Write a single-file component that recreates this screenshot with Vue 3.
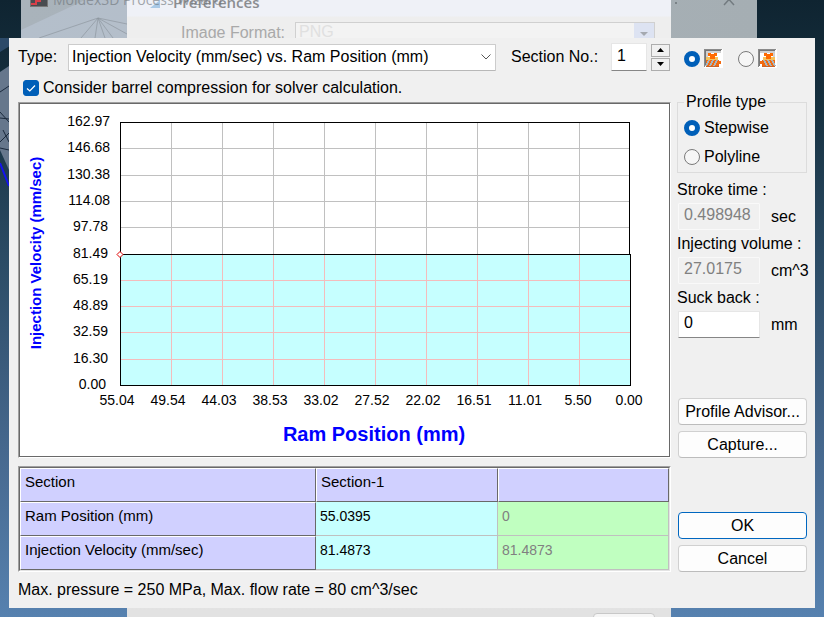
<script setup>
import { computed, ref } from 'vue'

const profileKind = ref('Injection Velocity (mm/sec) vs. Ram Position (mm)')
const section = ref(1)
const compression = ref(true)
const direction = ref('left')
const shape = ref('Stepwise')
const strokeTime = ref('0.498948')
const volume = ref('27.0175')
const suckBack = ref('0')

const plot = { left: 100, top: 18, width: 510, height: 263 }
const yValues = ['162.97', '146.68', '130.38', '114.08', '97.78', '81.49', '65.19', '48.89', '32.59', '16.30', '0.00']
const xValues = ['55.04', '49.54', '44.03', '38.53', '33.02', '27.52', '22.02', '16.51', '11.01', '5.50', '0.00']

const yTicks = computed(() =>
  yValues.map((label, i) => {
    const y = plot.top + Math.round((plot.height * i) / 10)
    return { label, y, textX: 90 - 2 * (6 - label.length), lower: i > 5 }
  })
)
const xTicks = computed(() =>
  xValues.map((label, i) => ({
    label,
    x: plot.left + 51 * i,
    textX: plot.left - 3 + 51 * i + 2 * (5 - label.length)
  }))
)
const levelY = 150
const bottomY = plot.top + plot.height
const rightX = plot.left + plot.width
</script>

<template>
  <div class="desktop">
    <div class="backdrop" aria-hidden="true">
      <svg class="mesh" width="127" height="617" viewBox="0 0 127 617">
        <path d="M0 52 L85 0 H127 V38 H0 Z" fill="#2c4a69" />
        <path d="M0 72 L9 66 V170 L0 150 Z" fill="#66778c" />
        <path d="M0 92 L9 86 M0 118 L9 119 M0 142 L9 133 M0 148 L9 150 M0 112 L9 122 M3 130 L9 142" stroke="#1b2a3c" fill="none" />
        <path d="M0 163 L9 186" stroke="#1414f0" stroke-width="2" />
      </svg>
      <div class="wizard">
        <svg class="fan" width="106" height="38" viewBox="0 0 106 38">
          <path d="M0 30 L64 0 H106 V38 H0 Z" fill="#bcc7d6" opacity=".6" />
          <path d="M18 38 L77 18 L60 38 M77 18 L74 38 M77 18 L84 38 M77 18 L92 38 M77 18 L106 34 M77 18 L106 24" stroke="#8f979f" fill="none" opacity=".7" />
        </svg>
        <svg class="close" width="12" height="12" viewBox="0 0 12 12">
          <path d="M1 0 L11 11 M11 0 L1 11" stroke="#737b80" stroke-width="1.5" fill="none" />
        </svg>
        <i class="dot"></i>
      </div>
      <div class="prefs">
        <div class="prefs-title"><i class="prefs-icon"></i><span>Preferences</span></div>
        <div class="prefs-row">
          <span>Image Format:</span>
          <div class="prefs-combo"><span>PNG</span><b></b></div>
        </div>
        <div class="prefs-button"></div>
      </div>
      <div class="wizard-title">
        <svg width="18" height="16" viewBox="0 0 18 16">
          <rect x="0.5" y="0.5" width="17" height="14" fill="#494c50" stroke="#777" />
          <path d="M1 12 H6 V9 H10 V5 H17" stroke="#d8404a" stroke-width="2" fill="none" />
        </svg>
        <span>Moldex3D Process Wizard</span>
      </div>
    </div>

    <main class="dialog">
      <section class="main">
        <div class="topbar">
          <label class="type-label" for="type">Type:</label>
          <div class="combo">
            <select id="type" v-model="profileKind">
              <option>Injection Velocity (mm/sec) vs. Ram Position (mm)</option>
            </select>
            <svg width="12" height="8" viewBox="0 0 12 8"><path d="M1.5 1.5 L6 6 L10.5 1.5" fill="none" stroke="#555" /></svg>
          </div>
          <label class="section-label" for="section">Section No.:</label>
          <input id="section" v-model="section" class="box section-box" type="text" />
          <div class="spin">
            <button type="button" aria-label="Next section" @click="section++">
              <svg width="7" height="4" viewBox="0 0 7 4"><path d="M0 4 L3.5 0 L7 4 Z" /></svg>
            </button>
            <button type="button" aria-label="Previous section" @click="section--">
              <svg width="7" height="4" viewBox="0 0 7 4"><path d="M0 0 L3.5 4 L7 0 Z" /></svg>
            </button>
          </div>
        </div>

        <label class="check">
          <input v-model="compression" type="checkbox" />
          <svg width="16" height="16" viewBox="0 0 16 16"><path d="M4 8.5 L6.8 11 L12 5.5" fill="none" stroke="#fff" stroke-width="1.2" /></svg>
          <span>Consider barrel compression for solver calculation.</span>
        </label>

        <div class="chart">
          <svg viewBox="0 0 649 352" role="img" aria-label="Injection velocity against ram position">
            <g shape-rendering="crispEdges">
              <rect :x="plot.left" :y="levelY" :width="plot.width" :height="bottomY - levelY" fill="#c6ffff" />
              <template v-for="t in xTicks.slice(1, -1)" :key="t.label">
                <rect :x="t.x" :y="plot.top" width="1" :height="levelY - plot.top" fill="#c0c0c0" />
                <rect :x="t.x" :y="levelY" width="1" :height="bottomY - levelY" fill="#f4bcbc" />
              </template>
              <rect
                v-for="t in yTicks.slice(1, -1)" :key="t.label"
                :x="plot.left" :y="t.y" :width="plot.width" height="1" :fill="t.lower ? '#f4bcbc' : '#c0c0c0'"
              />
              <rect :x="plot.left" :y="plot.top" :width="plot.width" height="1" />
              <rect :x="plot.left" :y="plot.top" width="1" :height="plot.height" />
              <rect :x="rightX - 1" :y="plot.top" width="1" :height="levelY - plot.top" />
              <rect :x="rightX" :y="levelY" width="1" :height="bottomY - levelY" />
              <rect :x="plot.left" :y="levelY" :width="plot.width + 1" height="1" />
              <rect :x="plot.left" :y="bottomY" :width="plot.width + 1" height="1" />
            </g>
            <path class="handle" d="M97 150.5 L100 147.5 L103 150.5 L100 153.5 Z" />
            <g class="tick">
              <text v-for="t in yTicks" :key="t.label" :x="t.textX" :y="t.y + 4" text-anchor="end">{{ t.label }}</text>
              <text v-for="t in xTicks" :key="t.label" :x="t.textX" y="301" text-anchor="middle">{{ t.label }}</text>
            </g>
            <text class="x-title" x="354" y="337" text-anchor="middle">Ram Position (mm)</text>
            <text class="y-title" transform="translate(21 149) rotate(-90)" text-anchor="middle">Injection Velocity (mm/sec)</text>
          </svg>
        </div>

        <div class="grid-frame">
          <table>
            <colgroup><col class="c1" /><col class="c2" /><col class="c3" /></colgroup>
            <tbody>
              <tr><th scope="col">Section</th><th scope="col">Section-1</th><th></th></tr>
              <tr><th scope="row">Ram Position (mm)</th><td class="cyan">55.0395</td><td class="green">0</td></tr>
              <tr><th scope="row">Injection Velocity (mm/sec)</th><td class="cyan">81.4873</td><td class="green">81.4873</td></tr>
            </tbody>
          </table>
        </div>
        <p class="limits">Max. pressure = 250 MPa, Max. flow rate = 80 cm^3/sec</p>
      </section>

      <aside class="side">
        <div class="directions">
          <label v-for="d in ['left', 'right']" :key="d">
            <input v-model="direction" type="radio" name="direction" :value="d" :aria-label="'Ram on the ' + d" />
            <svg class="machine" width="19" height="19" viewBox="0 0 19 19" shape-rendering="crispEdges">
              <path d="M0 0 H19 V19 H0 Z" fill="#fff" />
              <path d="M0 0 H18 V1 H1 V18 H0 Z" fill="#8a8a8a" />
              <path d="M1 1 H17 V2 H2 V17 H1 Z" fill="#777" />
              <g :transform="d === 'right' ? 'translate(19 0) scale(-1 1)' : undefined">
                <path d="M2 2 H17 V4 H2 Z M2 4 H4 V8 H2 Z" fill="#d0d0d0" />
                <path d="M4 4 H7 V5 H10 V4 H13 V7 H11 V10 H6 V7 H4 Z" fill="#ff6a00" />
                <path d="M2 8 H6 V10 H11 V8 H14 V11 H2 Z" fill="#f6c25a" />
                <path d="M2 11 H15 V12 H17 V15 H15 V17 H2 Z" fill="#f26a10" />
                <path d="M5 11 L2 17 M9 11 L6 17 M13 11 L10 17" stroke="#a9b5bd" stroke-width="1.5" />
                <path d="M2 17 H15 V18 H2 Z" fill="#c8632a" />
              </g>
            </svg>
          </label>
        </div>

        <fieldset>
          <legend>Profile type</legend>
          <label v-for="s in ['Stepwise', 'Polyline']" :key="s">
            <input v-model="shape" type="radio" name="shape" :value="s" /><span>{{ s }}</span>
          </label>
        </fieldset>

        <div class="fields">
          <div class="field">
            <label for="stroke">Stroke time :</label>
            <div><input id="stroke" v-model="strokeTime" class="box" type="text" disabled /><span>sec</span></div>
          </div>
          <div class="field">
            <label for="volume">Injecting volume :</label>
            <div><input id="volume" v-model="volume" class="box" type="text" disabled /><span>cm^3</span></div>
          </div>
          <div class="field">
            <label for="suck">Suck back :</label>
            <div><input id="suck" v-model="suckBack" class="box" type="text" /><span>mm</span></div>
          </div>
        </div>

        <div class="actions tools">
          <button type="button">Profile Advisor...</button>
          <button type="button">Capture...</button>
        </div>
        <div class="actions">
          <button type="button" class="primary">OK</button>
          <button type="button">Cancel</button>
        </div>
      </aside>
    </main>
  </div>
</template>

<style>
body { margin: 0; }
</style>

<style scoped>
* { box-sizing: border-box; }
.desktop {
  position: relative;
  min-height: 100vh;
  overflow: hidden;
  padding: 38px 9px 9px;
  background: linear-gradient(#0f2431 0, #16303f 100px, #2a4a63 250px, #46688e 450px, #5681af 617px);
  font: 16px/18px "Liberation Sans", Arial, sans-serif;
  color: #000;
}
.backdrop { position: absolute; inset: 0; overflow: hidden; }
.mesh { position: absolute; left: 0; top: 0; }
.wizard {
  position: absolute;
  left: 21px;
  right: 67px;
  top: 0;
  height: 60px;
  background: linear-gradient(90deg, #a9b3bb, #a5aeb3);
}
.wizard-title {
  position: absolute;
  left: 30px;
  top: -8px;
  display: flex;
  gap: 5px;
  color: #6d7378;
  font: 14px/16px "Open Sans", sans-serif;
  white-space: nowrap;
}
.wizard-title span { opacity: .6; }
.fan { position: absolute; left: 0; top: 0; }
.close { position: absolute; right: 22px; top: -6px; }
.dot { position: absolute; right: 80px; top: 2px; width: 2px; height: 2px; background: #7b8388; }
.prefs {
  position: absolute;
  left: 127px;
  right: 153px;
  top: 0;
  bottom: 0;
  background: linear-gradient(#eff1f7 0, #eff1f7 16px, #eee 17px, #eee 590px, #e2e2e2 610px);
}
.prefs-title { display: flex; gap: 13px; height: 16px; padding-left: 23px; }
.prefs-icon { width: 10px; height: 8px; background: #a9c9e6; clip-path: polygon(100% 0, 100% 100%, 0 100%); }
.prefs-title span { margin-top: -7px; color: #8b8d91; font: 600 15px/18px "Open Sans", sans-serif; }
.prefs-row { display: flex; padding: 6px 16px 0 54px; color: #a9a9a9; white-space: nowrap; }
.prefs-row > span { width: 114px; padding-top: 2px; }
.prefs-combo {
  flex: 1;
  display: flex;
  justify-content: space-between;
  height: 24px;
  padding-left: 3px;
  border: 1px solid #d0d0d0;
  background: #f3f3f3;
  color: #e0e0e0;
}
.prefs-combo b { width: 20px; background: #dde3f2; display: grid; place-items: center; }
.prefs-combo b::after { content: ""; border: 4px solid transparent; border-top-color: #a5a9b0; border-bottom: 0; }
.prefs-button {
  position: absolute;
  right: 16px;
  bottom: -20px;
  width: 62px;
  height: 24px;
  border: 1px solid #c8c8c8;
  border-radius: 4px;
  background: #f6f6f6;
}

.dialog {
  position: relative;
  display: grid;
  grid-template-columns: minmax(0, 1fr) 130px;
  gap: 6px;
  padding: 5px 8px 9px 9px;
  min-height: 570px;
  background: #f0f0f0;
}
.topbar { display: flex; align-items: center; height: 28px; }
.type-label { width: 50px; }
.combo { flex: 1; min-width: 0; display: grid; align-items: center; }
.combo select, .combo svg { grid-area: 1 / 1; }
.combo svg { justify-self: end; margin-right: 4px; pointer-events: none; }
select {
  appearance: none;
  width: 100%;
  height: 27px;
  margin: 0;
  padding: 0 20px 0 3px;
  border: 1px solid #ccc;
  border-bottom-color: #b8b8b8;
  border-radius: 1px;
  background: #fff;
  color: #000;
  font: inherit;
}
.section-label { width: 115px; padding-left: 15px; }
.box {
  height: 27px;
  margin: 0;
  padding: 0 5px 3px;
  border: 1px solid #e6e6e6;
  border-bottom-color: #868686;
  border-radius: 1px;
  background: #fff;
  color: #000;
  font: inherit;
}
.box:disabled { background: #f0f0f0; color: #808080; border-color: #f9f9f9; }
.section-box { width: 36px; height: 28px; }
.spin { display: grid; gap: 1px; margin: 0 1px 0 4px; }
.spin button {
  display: grid;
  place-items: center;
  width: 19px;
  height: 13px;
  padding: 0;
  border: 1px solid #adadad;
  background: #f0f0f0;
}
.check { display: grid; grid-template-columns: 16px 1fr; column-gap: 4px; align-items: center; margin: 8px 0 5px 5px; }
.check input, .check svg { grid-area: 1 / 1; }
.check svg { pointer-events: none; }
.check input { appearance: none; width: 16px; height: 16px; margin: 0; border-radius: 3px; border: 1px solid #868686; background: #fff; }
.check input:checked { border-color: #005fb8; background: #005fb8; }

.chart, .grid-frame {
  border: 1px solid;
  border-color: #a0a0a0 #fff #fff #a0a0a0;
}
.chart svg {
  display: block;
  width: 100%;
  border: 1px solid #696969;
  background: #fff;
}
.handle { fill: #fff; stroke: #e00000; stroke-width: 1; }
.tick { font-size: 14px; }
.x-title { font-size: 20px; font-weight: bold; fill: #00f; }
.y-title { font-size: 15px; font-weight: bold; fill: #00f; }

.grid-frame { margin-top: 8px; }
table {
  width: 100%;
  table-layout: fixed;
  border-collapse: separate;
  border-spacing: 0;
  border: 1px solid;
  border-color: #696969 #e3e3e3 #e3e3e3 #696969;
  font-size: 14px;
  line-height: 16px;
}
.c1 { width: 296px; }
.c2 { width: 182px; }
th, td { height: 34px; padding: 6px 4px 10px; text-align: left; vertical-align: top; font-weight: normal; }
th {
  padding-top: 5px;
  border: 1px solid;
  border-color: #fff #696969 #696969 #fff;
  background: #d0d0ff;
  font-size: 15px;
}
td { border: 1px solid #c0c0c0; border-width: 0 1px 1px 0; }
.cyan { background: #c6ffff; }
.green { background: #c0ffc0; color: #808080; }
.limits { margin: 9px 0 0; }

.side { display: flex; flex-direction: column; }
.directions { display: flex; gap: 15px; height: 30px; padding: 5px 0 0 7px; }
.directions label { display: flex; align-items: center; gap: 4px; height: 22px; }
.machine { margin-bottom: 2px; }
input[type="radio"] {
  appearance: none;
  width: 16px;
  height: 16px;
  margin: 0;
  border: 1px solid #7a7a7a;
  border-radius: 50%;
  background: #f6f6f6;
}
input[type="radio"]:checked { border: 5px solid #005fb8; background: #fff; }
fieldset {
  margin: 20px 0 0;
  padding: 8px 0 6px 6px;
  border: 1px solid #dcdcdc;
  min-width: 0;
}
legend { padding: 0 2px; }
fieldset label { display: flex; align-items: center; gap: 4px; }
fieldset label + label { margin-top: 11px; }
.fields { display: grid; gap: 5px; margin-top: 8px; }
.field { display: grid; gap: 4px; }
.field > div { display: flex; align-items: center; }
.field .box { width: 82px; margin-left: 1px; }
.field span { margin-left: 11px; white-space: nowrap; }
.actions { display: grid; gap: 6px; padding-left: 1px; }
.tools { margin: 60px 0 54px; }
.actions button {
  height: 27px;
  padding: 0;
  border: 1px solid #d0d0d0;
  border-bottom-color: #bcbcbc;
  border-radius: 4px;
  background: #fdfdfd;
  color: #000;
  font: inherit;
  white-space: nowrap;
}
.actions .primary { border-color: #0067c0; }
</style>
